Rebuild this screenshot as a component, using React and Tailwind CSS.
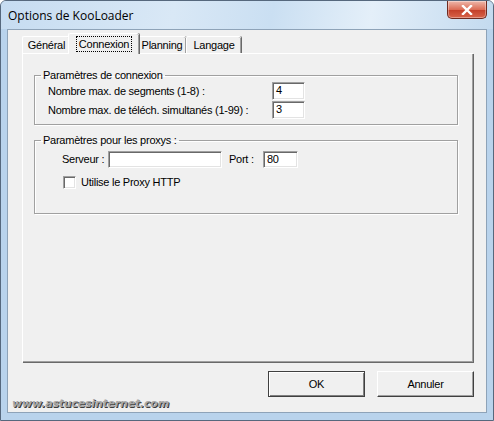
import React from "react";

const sunken =
  "border border-t-[#a0a0a0] border-l-[#a0a0a0] border-r-white border-b-white shadow-[inset_1px_1px_0_#696969,inset_-1px_-1px_0_#e3e3e3] bg-white";

const Tab = ({ label, width, selected }) => (
  <div
    className={
      selected
        ? "relative z-10 -mx-[2px] mb-[-1px] flex h-[21px] items-start justify-center rounded-t-[2px] border-t border-l border-t-white border-l-white bg-[#f0f0f0] pt-[2px] shadow-[inset_-1px_0_0_#a0a0a0,1px_0_0_#696969]"
        : "flex h-[17px] items-center justify-center rounded-t-[2px] border-t border-l border-t-white border-l-white shadow-[inset_-1px_0_0_#a0a0a0,1px_0_0_#696969]"
    }
    style={{ width }}
  >
    {selected ? (
      <span className="border border-dotted border-black px-[2px] leading-[14px]">
        {label}
      </span>
    ) : (
      <span className="leading-[13px]">{label}</span>
    )}
  </div>
);

const Button = ({ children, isDefault }) => (
  <div
    className={
      "flex h-[26px] w-[97px] items-center justify-center border bg-[#f0f0f0] " +
      (isDefault
        ? "border-[#404040] shadow-[inset_1px_1px_0_white,inset_-1px_-1px_0_#808080]"
        : "border-t-white border-l-white border-r-[#404040] border-b-[#404040] shadow-[inset_-1px_-1px_0_#a0a0a0]")
    }
  >
    {children}
  </div>
);

export default function App() {
  return (
    <div className="flex h-[421px] w-[494px] flex-col overflow-hidden rounded-t-[6px] border border-[#56687d] bg-[#b9d3ec] font-['Liberation_Sans',Arial,sans-serif] text-[11px] tracking-[-0.25px] text-black">
      {/* Barre de titre */}
      <div className="flex h-[28px] shrink-0 items-start justify-between bg-[linear-gradient(100deg,#c6dcf1_0%,#d9e8f6_35%,#cadff2_55%,#e4eff9_75%,#c3daef_100%)] pl-[7px] pr-[6px]">
        <span className="mt-[7px] font-['Open_Sans','Noto_Sans',sans-serif] text-[12px] leading-[16px] tracking-normal">
          Options de KooLoader
        </span>
        <div className="flex h-[18px] w-[40px] items-center justify-center rounded-b-[5px] border border-t-0 border-[#6e2a20] bg-[linear-gradient(#eeb8ab,#dc6d56_50%,#c4402a_55%,#d8644a)] shadow-[inset_0_0_0_1px_rgba(255,255,255,0.35)]">
          <svg width="12" height="10" viewBox="0 0 12 10">
            <path
              d="M2 1 L10 9 M10 1 L2 9"
              stroke="white"
              strokeWidth="2.4"
              strokeLinecap="square"
            />
          </svg>
        </div>
      </div>

      {/* Zone client */}
      <div className="mx-[6px] flex h-[384px] shrink-0 flex-col border border-[#8ea3b8] bg-[#f0f0f0]">
        {/* Onglets */}
        <div className="ml-[14px] mt-[3px] flex h-[20px] items-end">
          <Tab label="Général" width={48} />
          <Tab label="Connexion" width={71} selected />
          <Tab label="Planning" width={49} />
          <Tab label="Langage" width={55} />
        </div>

        {/* Panneau */}
        <div className="ml-[14px] flex h-[309px] w-[451px] flex-col border-t border-l border-t-white border-l-white px-[11px] shadow-[inset_-1px_-1px_0_#a0a0a0,1px_1px_0_#696969]">
          <fieldset className="mt-[15px] w-[424px] border border-[#a0a0a0] pb-[5px] shadow-[inset_1px_1px_0_white,1px_1px_0_white]">
            <legend className="ml-[6px] px-[2px] leading-[13px]">
              Paramètres de connexion
            </legend>
            <div className="flex flex-col gap-[1px] pl-[13px]">
              <div className="flex h-[18px] items-center">
                <span className="w-[224px]">Nombre max. de segments (1-8) :</span>
                <div className={"h-[18px] w-[33px] pl-[3px] leading-[15px] " + sunken}>4</div>
              </div>
              <div className="flex h-[18px] items-center">
                <span className="w-[224px]">
                  Nombre max. de téléch. simultanés (1-99) :
                </span>
                <div className={"h-[18px] w-[33px] pl-[3px] leading-[15px] " + sunken}>3</div>
              </div>
            </div>
          </fieldset>

          <fieldset className="mt-[9px] w-[424px] border border-[#a0a0a0] pb-[24px] shadow-[inset_1px_1px_0_white,1px_1px_0_white]">
            <legend className="ml-[6px] px-[2px] leading-[13px]">
              Paramètres pour les proxys :
            </legend>
            <div className="mt-[4px] flex h-[17px] items-center pl-[27px]">
              <span className="w-[46px]">Serveur :</span>
              <div className={"h-[17px] w-[114px] " + sunken}></div>
              <span className="ml-[7px] w-[34px]">Port :</span>
              <div className={"h-[17px] w-[35px] pl-[3px] leading-[14px] " + sunken}>80</div>
            </div>
            <div className="mt-[8px] flex h-[13px] items-center pl-[28px]">
              <div className={"h-[13px] w-[13px] " + sunken}></div>
              <span className="ml-[5px]">Utilise le Proxy HTTP</span>
            </div>
          </fieldset>
        </div>

        {/* Pied */}
        <div className="flex flex-1 justify-between pl-[4px] pr-[12px]">
          <span className="self-end pb-[1px] font-['DejaVu_Sans',sans-serif] text-[11px] font-bold italic leading-[14px] tracking-[-0.2px] text-[#a8a8a8] [text-shadow:1px_1px_0_#3c3c3c]">
            www.astucesinternet.com
          </span>
          <div className="mt-[9px] flex gap-[12px]">
            <Button isDefault>OK</Button>
            <Button>Annuler</Button>
          </div>
        </div>
      </div>
    </div>
  );
}
